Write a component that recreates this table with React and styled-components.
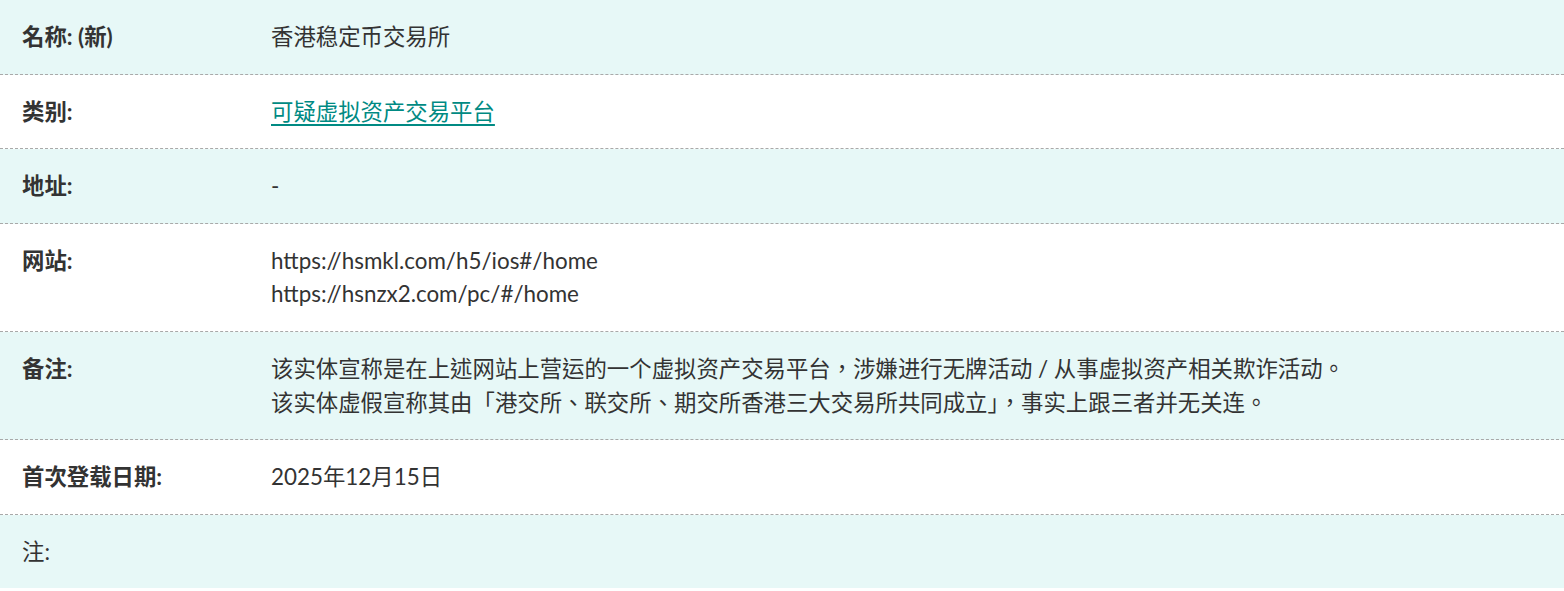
import React from 'react'
import styled, { createGlobalStyle } from 'styled-components'

const GlobalStyle = createGlobalStyle`
  body {
    margin: 0;
    background: #ffffff;
    font-family: Lato, "Noto Sans CJK TC", sans-serif;
    color: #333333;
  }
`;

const Table = styled.div`
  width: 100%;
  display: flex;
  flex-direction: column;
`;

const Row = styled.div`
  display: grid;
  grid-template-columns: 271px 1fr;
  background: ${p => (p.$tinted ? '#e7f8f7' : '#ffffff')};
  border-bottom: 1px dashed #a9a9a9;
  &:last-child {
    border-bottom: none;
  }
`;

const Label = styled.div`
  padding: 20px 0 20px 22px;
  font-size: 22.4px;
  line-height: 1.5;
  font-weight: ${p => (p.$plain ? 400 : 700)};
  color: #333333;
`;

const Value = styled.div`
  padding: 20px 20px 20px 0;
  font-size: 22.4px;
  line-height: 1.5;
  color: #333333;
`;

const Line = styled.div``;

const Anchor = styled.a`
  color: #008a83;
  text-decoration: underline;
  text-decoration-thickness: 2px;
  text-underline-offset: 4px;
`;

const rows = [
  { label: '名称: (新)', value: ['香港稳定币交易所'] },
  { label: '类别:', link: '可疑虚拟资产交易平台' },
  { label: '地址:', value: ['-'] },
  { label: '网站:', value: ['https://hsmkl.com/h5/ios#/home', 'https://hsnzx2.com/pc/#/home'] },
  {
    label: '备注:',
    value: [
      '该实体宣称是在上述网站上营运的一个虚拟资产交易平台，涉嫌进行无牌活动 / 从事虚拟资产相关欺诈活动。',
      '该实体虚假宣称其由「港交所、联交所、期交所香港三大交易所共同成立」，事实上跟三者并无关连。',
    ],
  },
  { label: '首次登载日期:', value: ['2025年12月15日'] },
  { label: '注:', value: [''], plain: true },
]

const App = () => {
  return (
    <>
      <GlobalStyle />
      <Table>
        {rows.map((r, i) => (
          <Row key={i} $tinted={i % 2 === 0}>
            <Label $plain={r.plain}>{r.label}</Label>
            <Value>
              {r.link ? (
                <Anchor href="#">{r.link}</Anchor>
              ) : (
                r.value.map((v, j) => <Line key={j}>{v || '\u00a0'}</Line>)
              )}
            </Value>
          </Row>
        ))}
      </Table>
    </>
  )
}

export default App
